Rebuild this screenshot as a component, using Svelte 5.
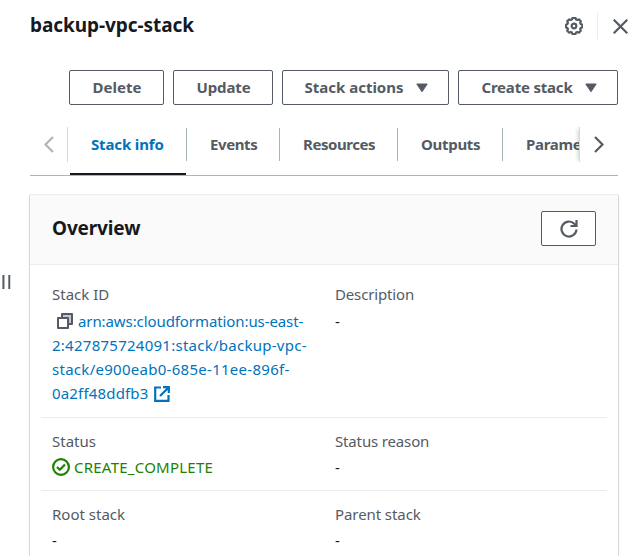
<script>
  const tabs = [
    { label: 'Stack info', id: 'info', active: true },
    { label: 'Events', id: 'events' },
    { label: 'Resources', id: 'resources' },
    { label: 'Outputs', id: 'outputs' },
    { label: 'Parameters', id: 'parameters' }
  ];
  const actions = [
    { label: 'Delete', id: 'delete' },
    { label: 'Update', id: 'update' },
    { label: 'Stack actions', id: 'stack-actions', menu: true },
    { label: 'Create stack', id: 'create', menu: true }
  ];
</script>

<div class="page">
  <div class="handle"><i></i><i></i></div>
  <main>
    <header>
      <h1><span>backup-vpc-stack</span></h1>
      <svg class="gear" width="18" height="18" viewBox="0 0 18 18" fill="none" stroke="#545b64" stroke-width="2.200" stroke-linejoin="round">
        <path d="M7.500 1h3l.6 1.500 1.300.5 1.500-.6 1.900 1.900-.6 1.500.5 1.200 1.600.7v2.700l-1.600.6-.5 1.200.6 1.600-1.900 1.900-1.500-.7-1.300.6-.6 1.500h-3l-.6-1.500-1.200-.6-1.500.7-2-1.900.7-1.600-.5-1.200L1 10.400V7.700l1.400-.7.5-1.200-.7-1.500 2-1.900 1.500.6L6.900 2.500z" />
        <circle cx="9" cy="9" r="2.300" />
      </svg>
      <span class="rule"></span>
      <svg class="close" width="15" height="15" viewBox="0 0 15 15" fill="none" stroke="#545b64" stroke-width="2.200"><path d="M.7.7l13.600 13.600M14.300.7L.7 14.300" /></svg>
    </header>

    <div class="actions">
      {#each actions as a}
        <button class={a.id}><span>{a.label}</span>{#if a.menu}<svg width="12" height="10" viewBox="0 0 12 10"><path d="M.8 1h10.400L6 8.800z" fill="#545b64" stroke="#545b64" stroke-linejoin="round" /></svg>{/if}</button>
      {/each}
    </div>

    <nav>
      <div class="arrow left"><svg width="10" height="17" viewBox="0 0 10 17" fill="none" stroke="#aab7b8" stroke-width="2.200"><path d="M9 1L1.500 8.500 9 16" /></svg></div>
      <div class="tabs">
        {#each tabs as t}
          <div class="tab {t.id}" class:active={t.active}><span>{t.label}</span></div>
        {/each}
      </div>
      <div class="arrow right"><svg width="10" height="17" viewBox="0 0 10 17" fill="none" stroke="#545b64" stroke-width="2.200"><path d="M1 1l7.500 7.500L1 16" /></svg></div>
    </nav>

    <section>
      <div class="head">
        <h2>Overview</h2>
        <button class="refresh" aria-label="Refresh"><svg width="18" height="18" viewBox="0 0 18 18" fill="none" stroke="#545b64" stroke-width="2.200"><path d="M16.500 9.500A7.500 7.500 0 1 1 14.300 3.700L16 5.500" /><path d="M16.500 0v6H10.500" /></svg></button>
      </div>
      <div class="body">
        <div class="row first">
          <div class="cell">
            <label>Stack ID</label>
            <div class="arn">
              <svg class="copy" width="16" height="16" viewBox="0 0 16 16" fill="none" stroke="#545b64" stroke-width="2" stroke-linejoin="round"><path d="M5 5V1h10v10h-4z" fill="#c4c8cc" stroke="none" /><path d="M1 5h10v10H1z" fill="#fff" /><path d="M5 5V1h10v10h-4" /></svg><span class="l1">arn:aws:cloudformation:us-east-</span><br /><span class="l2">2:427875724091:stack/backup-vpc-</span><br /><span class="l3">stack/e900eab0-685e-11ee-896f-</span><br /><span class="l4">0a2ff48ddfb3</span><svg class="ext" width="16" height="16" viewBox="0 0 16 16" fill="none" stroke="#0073bb" stroke-width="2.200"><path d="M7 1.500H1.200V14.800h13.300V9M9 1.200h5.800v5.800M14.800 1.200L6 10" /></svg>
            </div>
          </div>
          <div class="cell"><label class="tight">Description</label><div class="val">-</div></div>
        </div>
        <div class="row second">
          <div class="cell"><label>Status</label><div class="status"><svg width="18" height="18" viewBox="0 0 18 18" fill="none" stroke="#1d8102" stroke-width="2.200"><circle cx="9" cy="9" r="7.900" /><path d="M5 9l2.800 2.800L13 6.500" /></svg><span>CREATE_COMPLETE</span></div></div>
          <div class="cell"><label class="tight">Status reason</label><div class="val">-</div></div>
        </div>
        <div class="row third">
          <div class="cell"><label>Root stack</label><div class="val">-</div></div>
          <div class="cell"><label class="parent">Parent stack</label><div class="val">-</div></div>
        </div>
      </div>
    </section>
  </main>
</div>

<style>
  :global(body) { background: #fff; overflow: hidden; }
  * { box-sizing: border-box; }
  .page { display: flex; width: 641px; height: 556px; overflow: hidden; font: 15px/24px "Noto Sans", sans-serif; color: #16191f; }
  .handle { width: 29px; flex: none; display: flex; gap: 3px; padding: 275px 0 0 2px; }
  .handle i { width: 3px; height: 14px; background: linear-gradient(90deg, #9a9fa5 1px, #545b64 1px 2px, #b4b8bc 2px); }
  .handle i + i { background: linear-gradient(90deg, #878d94 1px, #545b64 1px 2px, #d5d8da 2px); }
  main { width: 612px; flex: none; display: flex; flex-direction: column; }
  header { height: 70px; flex: none; display: flex; align-items: flex-start; padding-left: 1px; }
  h1 { font-size: 19px; line-height: 28px; font-weight: 700; margin: 11px 0 0; width: 535px; letter-spacing: -.05px; white-space: nowrap; }
  .gear { margin-top: 17px; flex: none; }
  .rule { width: 1px; height: 26px; background: #eaeded; margin: 13px 15px 0 14px; flex: none; }
  .close { margin-top: 19px; flex: none; }
  .actions { display: flex; gap: 9px; padding-left: 40px; height: 57px; flex: none; }
  button { height: 35px; flex: none; padding: 0; display: flex; align-items: center; justify-content: center; background: #fff; border: 1px solid #545b64; border-radius: 2px; color: #545b64; font: 700 15px/24px "Noto Sans", sans-serif; white-space: nowrap; }
  button span { margin-bottom: 2px; }
  button svg { margin-left: 11px; }
  .delete { width: 95px; padding-left: 1px; }
  .update { width: 100px; padding-left: 1px; letter-spacing: -.1px; }
  .stack-actions { width: 167px; padding-left: 1px; }
  .stack-actions svg { margin-left: 12px; }
  .create { width: 160px; letter-spacing: -.2px; padding-left: 2px; }
  .create svg { margin-left: 12px; }
  nav { display: flex; height: 49px; flex: none; width: 588px; margin-left: 1px; border-bottom: 1px solid #aab7b8; }
  .arrow { height: 35px; flex: none; display: flex; align-items: center; }
  .left { width: 38px; border-right: 1px solid #d5dbdb; padding-left: 14px; }
  .right { width: 39px; border-left: 1px solid #d5dbdb; padding-left: 14px; box-shadow: -3px 0 4px -2px rgba(0,28,36,.2); background: #fff; clip-path: inset(0 0 0 -8px); }
  .tabs { width: 511px; flex: none; display: flex; overflow: hidden; padding-left: 2px; }
  .tab { flex: none; height: 48px; padding: 5px 0 0 23px; color: #545b64; font-weight: 700; white-space: nowrap; letter-spacing: -.3px; background: linear-gradient(#aab7b8, #aab7b8) right 1px / 1px 33px no-repeat; }
  .info { width: 117px; }
  .active { color: #0073bb; padding-left: 21px; letter-spacing: -.15px; background: linear-gradient(#aab7b8, #aab7b8) right 1px / 1px 33px no-repeat, linear-gradient(#16191f, #16191f) 0 46px / 116px 2px no-repeat; }
  .events { width: 93px; letter-spacing: -.4px; }
  .resources { width: 118px; letter-spacing: -.45px; }
  .outputs { width: 105px; }
  section { margin-top: 18px; width: 590px; height: 380px; flex: none; border: 1px solid #d5dbdb; border-top-color: #eaeded; border-radius: 2px; box-shadow: 0 1px 1px rgba(0,28,36,.15); }
  .head { height: 70px; display: flex; justify-content: space-between; align-items: flex-start; padding: 16px 22px 0; background: #fafafa; border-bottom: 1px solid #eaeded; }
  h2 { margin: 3px 0 0; font-size: 19px; line-height: 28px; font-weight: 700; letter-spacing: -.15px; }
  .refresh { width: 55px; }
  .refresh svg { margin: 0; }
  .body { padding: 0 11px; }
  .row { display: flex; border-bottom: 1px solid #eaeded; }
  .first { height: 153px; padding-top: 17px; }
  .second { height: 73px; padding-top: 11px; }
  .third { height: 80px; padding-top: 11px; }
  .cell { width: 283px; flex: none; padding-left: 11px; white-space: nowrap; }
  label { display: block; color: #545b64; height: 24px; }
  .tight { letter-spacing: -.15px; }
  .parent { letter-spacing: -.08px; }
  .val { margin-top: 3px; }
  .second .val, .second .status, .third .val { margin-top: 2px; }
  .arn { color: #0073bb; margin-top: 3px; }
  .copy { margin: 0 5px 0 5px; vertical-align: -2px; }
  .l1 { letter-spacing: -.09px; }
  .l2 { letter-spacing: .26px; }
  .l3 { letter-spacing: .28px; }
  .l4 { letter-spacing: .17px; }
  .ext { margin-left: 5px; vertical-align: -3px; }
  .status { display: flex; align-items: center; gap: 4px; color: #1d8102; letter-spacing: .24px; }
</style>
